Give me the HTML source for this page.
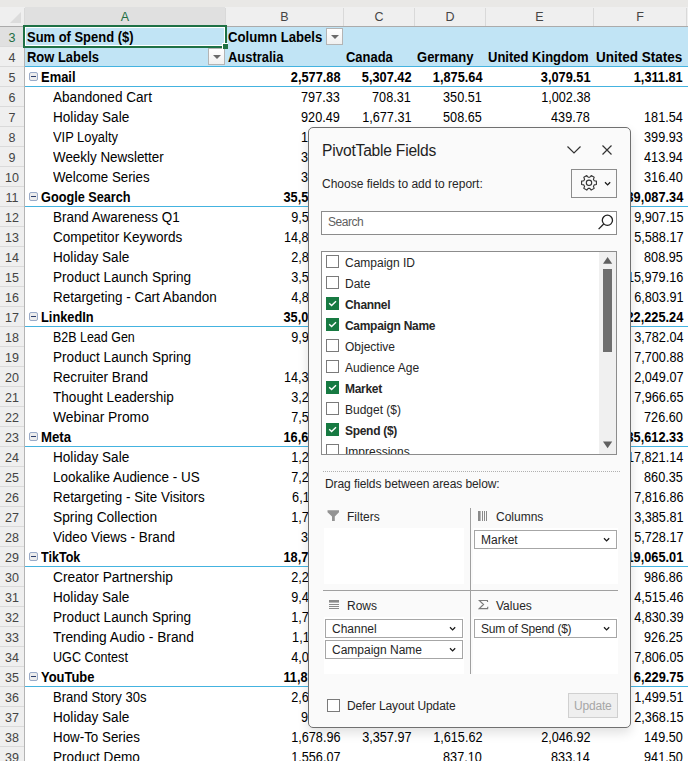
<!DOCTYPE html><html><head><meta charset="utf-8"><style>
*{box-sizing:border-box}
html,body{margin:0;padding:0}
body{width:688px;height:761px;overflow:hidden;position:relative;background:#fff;font-family:"Liberation Sans",sans-serif;color:#000}
.ab{position:absolute}
.t{position:absolute;height:20px;line-height:20px;white-space:nowrap;font-size:14px;transform-origin:0 0;transform:scaleX(0.97)}
.b{font-weight:bold;transform:scaleX(0.925)}
.n{position:absolute;height:20px;line-height:20px;white-space:nowrap;font-size:14px;text-align:right;transform-origin:100% 0;transform:scaleX(0.905)}
.nb{font-weight:bold;transform:scaleX(0.912)}
.rh{position:absolute;left:0;width:24px;height:20px;line-height:20px;text-align:center;font-size:12.5px;color:#444}
.ch{position:absolute;top:8px;height:19px;line-height:19px;text-align:center;font-size:12.5px;color:#444}
.dd{position:absolute;width:17px;height:17px;border:1px solid #b4b4b4;background:linear-gradient(#fff,#f0f0f0)}
.dd:after{content:"";position:absolute;left:4px;top:6px;border-left:4px solid transparent;border-right:4px solid transparent;border-top:4px solid #6a6a6a}
.p{position:absolute;font-size:12px;color:#262626;white-space:nowrap;line-height:16px}
.cb{position:absolute;width:13px;height:13px;border:1px solid #7a7a7a;background:#fff}
.cbc{position:absolute;width:13px;height:13px;background:#177a42}
.item{position:absolute;height:19px;border:1px solid #a6a6a6;background:#fff}
.item span{position:absolute;left:6px;top:1px;font-size:12px;line-height:16px;color:#262626;white-space:nowrap}
.chev{position:absolute;width:5px;height:5px;border-right:1.5px solid #333;border-bottom:1.5px solid #333;transform:rotate(45deg)}
</style></head><body>

<div class="ab" style="left:0;top:0;width:688px;height:7px;background:#e9e8e6"></div>
<div class="ab" style="left:0;top:7px;width:688px;height:19px;background:#efefef"></div>
<div class="ab" style="left:25px;top:7px;width:200px;height:19px;background:#e0e0e0"></div>
<div class="ab" style="left:0;top:26px;width:688px;height:1px;background:#ababab"></div>
<svg class="ab" style="left:0;top:7px" width="24" height="19"><polygon points="10,16 21,16 21,5" fill="#dcdcdc"/></svg>
<div class="ab" style="left:24px;top:8px;width:1px;height:18px;background:#d9d9d9"></div>
<div class="ab" style="left:225px;top:8px;width:1px;height:18px;background:#d9d9d9"></div>
<div class="ab" style="left:343px;top:8px;width:1px;height:18px;background:#d9d9d9"></div>
<div class="ab" style="left:414px;top:8px;width:1px;height:18px;background:#d9d9d9"></div>
<div class="ab" style="left:485px;top:8px;width:1px;height:18px;background:#d9d9d9"></div>
<div class="ab" style="left:593px;top:8px;width:1px;height:18px;background:#d9d9d9"></div>
<div class="ab" style="left:686px;top:8px;width:1px;height:18px;background:#d9d9d9"></div>
<div class="ch" style="left:25px;width:200px;color:#1e6e42">A</div>
<div class="ch" style="left:226px;width:117px;color:#444">B</div>
<div class="ch" style="left:344px;width:70px;color:#444">C</div>
<div class="ch" style="left:415px;width:70px;color:#444">D</div>
<div class="ch" style="left:486px;width:107px;color:#444">E</div>
<div class="ch" style="left:594px;width:92px;color:#444">F</div>
<div class="ab" style="left:0;top:27px;width:24px;height:734px;background:#efefef"></div>
<div class="ab" style="left:0;top:27px;width:24px;height:19px;background:#e0e0e0"></div>
<div class="ab" style="left:24px;top:27px;width:1px;height:734px;background:#b4b4b4"></div>
<div class="rh" style="top:28px;color:#1e6e42">3</div>
<div class="ab" style="left:0;top:46px;width:24px;height:1px;background:#dadada"></div>
<div class="rh" style="top:48px;color:#444">4</div>
<div class="ab" style="left:0;top:66px;width:24px;height:1px;background:#dadada"></div>
<div class="rh" style="top:68px;color:#444">5</div>
<div class="ab" style="left:0;top:86px;width:24px;height:1px;background:#dadada"></div>
<div class="rh" style="top:88px;color:#444">6</div>
<div class="ab" style="left:0;top:106px;width:24px;height:1px;background:#dadada"></div>
<div class="rh" style="top:108px;color:#444">7</div>
<div class="ab" style="left:0;top:126px;width:24px;height:1px;background:#dadada"></div>
<div class="rh" style="top:128px;color:#444">8</div>
<div class="ab" style="left:0;top:146px;width:24px;height:1px;background:#dadada"></div>
<div class="rh" style="top:148px;color:#444">9</div>
<div class="ab" style="left:0;top:166px;width:24px;height:1px;background:#dadada"></div>
<div class="rh" style="top:168px;color:#444">10</div>
<div class="ab" style="left:0;top:186px;width:24px;height:1px;background:#dadada"></div>
<div class="rh" style="top:188px;color:#444">11</div>
<div class="ab" style="left:0;top:206px;width:24px;height:1px;background:#dadada"></div>
<div class="rh" style="top:208px;color:#444">12</div>
<div class="ab" style="left:0;top:226px;width:24px;height:1px;background:#dadada"></div>
<div class="rh" style="top:228px;color:#444">13</div>
<div class="ab" style="left:0;top:246px;width:24px;height:1px;background:#dadada"></div>
<div class="rh" style="top:248px;color:#444">14</div>
<div class="ab" style="left:0;top:266px;width:24px;height:1px;background:#dadada"></div>
<div class="rh" style="top:268px;color:#444">15</div>
<div class="ab" style="left:0;top:286px;width:24px;height:1px;background:#dadada"></div>
<div class="rh" style="top:288px;color:#444">16</div>
<div class="ab" style="left:0;top:306px;width:24px;height:1px;background:#dadada"></div>
<div class="rh" style="top:308px;color:#444">17</div>
<div class="ab" style="left:0;top:326px;width:24px;height:1px;background:#dadada"></div>
<div class="rh" style="top:328px;color:#444">18</div>
<div class="ab" style="left:0;top:346px;width:24px;height:1px;background:#dadada"></div>
<div class="rh" style="top:348px;color:#444">19</div>
<div class="ab" style="left:0;top:366px;width:24px;height:1px;background:#dadada"></div>
<div class="rh" style="top:368px;color:#444">20</div>
<div class="ab" style="left:0;top:386px;width:24px;height:1px;background:#dadada"></div>
<div class="rh" style="top:388px;color:#444">21</div>
<div class="ab" style="left:0;top:406px;width:24px;height:1px;background:#dadada"></div>
<div class="rh" style="top:408px;color:#444">22</div>
<div class="ab" style="left:0;top:426px;width:24px;height:1px;background:#dadada"></div>
<div class="rh" style="top:428px;color:#444">23</div>
<div class="ab" style="left:0;top:446px;width:24px;height:1px;background:#dadada"></div>
<div class="rh" style="top:448px;color:#444">24</div>
<div class="ab" style="left:0;top:466px;width:24px;height:1px;background:#dadada"></div>
<div class="rh" style="top:468px;color:#444">25</div>
<div class="ab" style="left:0;top:486px;width:24px;height:1px;background:#dadada"></div>
<div class="rh" style="top:488px;color:#444">26</div>
<div class="ab" style="left:0;top:506px;width:24px;height:1px;background:#dadada"></div>
<div class="rh" style="top:508px;color:#444">27</div>
<div class="ab" style="left:0;top:526px;width:24px;height:1px;background:#dadada"></div>
<div class="rh" style="top:528px;color:#444">28</div>
<div class="ab" style="left:0;top:546px;width:24px;height:1px;background:#dadada"></div>
<div class="rh" style="top:548px;color:#444">29</div>
<div class="ab" style="left:0;top:566px;width:24px;height:1px;background:#dadada"></div>
<div class="rh" style="top:568px;color:#444">30</div>
<div class="ab" style="left:0;top:586px;width:24px;height:1px;background:#dadada"></div>
<div class="rh" style="top:588px;color:#444">31</div>
<div class="ab" style="left:0;top:606px;width:24px;height:1px;background:#dadada"></div>
<div class="rh" style="top:608px;color:#444">32</div>
<div class="ab" style="left:0;top:626px;width:24px;height:1px;background:#dadada"></div>
<div class="rh" style="top:628px;color:#444">33</div>
<div class="ab" style="left:0;top:646px;width:24px;height:1px;background:#dadada"></div>
<div class="rh" style="top:648px;color:#444">34</div>
<div class="ab" style="left:0;top:666px;width:24px;height:1px;background:#dadada"></div>
<div class="rh" style="top:668px;color:#444">35</div>
<div class="ab" style="left:0;top:686px;width:24px;height:1px;background:#dadada"></div>
<div class="rh" style="top:688px;color:#444">36</div>
<div class="ab" style="left:0;top:706px;width:24px;height:1px;background:#dadada"></div>
<div class="rh" style="top:708px;color:#444">37</div>
<div class="ab" style="left:0;top:726px;width:24px;height:1px;background:#dadada"></div>
<div class="rh" style="top:728px;color:#444">38</div>
<div class="ab" style="left:0;top:746px;width:24px;height:1px;background:#dadada"></div>
<div class="rh" style="top:748px;color:#444">39</div>
<div class="ab" style="left:0;top:766px;width:24px;height:1px;background:#dadada"></div>
<div class="ab" style="left:25px;top:27px;width:663px;height:39px;background:#c1e4f5"></div>
<div class="ab" style="left:25px;top:66px;width:663px;height:1px;background:#44b3e0"></div>
<div class="ab" style="left:25px;top:86px;width:663px;height:1px;background:#44b3e0"></div>
<div class="ab" style="left:25px;top:206px;width:663px;height:1px;background:#44b3e0"></div>
<div class="ab" style="left:25px;top:326px;width:663px;height:1px;background:#44b3e0"></div>
<div class="ab" style="left:25px;top:446px;width:663px;height:1px;background:#44b3e0"></div>
<div class="ab" style="left:25px;top:566px;width:663px;height:1px;background:#44b3e0"></div>
<div class="ab" style="left:25px;top:686px;width:663px;height:1px;background:#44b3e0"></div>
<div class="t b" style="left:27px;top:27px">Sum of Spend ($)</div>
<div class="t b" style="left:228px;top:27px;transform:scaleX(0.94)">Column Labels</div>
<div class="t b" style="left:27px;top:47px">Row Labels</div>
<div class="t b" style="left:228px;top:47px;transform:scaleX(0.925)">Australia</div>
<div class="t b" style="left:346px;top:47px;transform:scaleX(0.925)">Canada</div>
<div class="t b" style="left:417px;top:47px;transform:scaleX(0.93)">Germany</div>
<div class="t b" style="left:488px;top:47px;transform:scaleX(0.93)">United Kingdom</div>
<div class="t b" style="left:596px;top:47px;transform:scaleX(0.965)">United States</div>
<div class="dd" style="left:326px;top:28px"></div>
<div class="dd" style="left:208px;top:48px"></div>
<div class="ab" style="left:23px;top:25px;width:204px;height:23px;border:2px solid #1e7145"></div>
<div class="ab" style="left:25px;top:27px;width:200px;height:19px;border:1px solid #fff"></div>
<div class="ab" style="left:222px;top:43px;width:6px;height:6px;background:#1e7145;border-left:1px solid #fff;border-top:1px solid #fff"></div>
<div class="ab" style="left:29px;top:72px;width:9px;height:9px;border:1px solid #9aabc9;border-radius:2px;background:#ececec"></div>
<div class="ab" style="left:31px;top:76px;width:5px;height:1px;background:#2b3d6b"></div>
<div class="t b" style="left:40.5px;top:67px">Email</div>
<div class="n nb" style="right:348px;top:67px">2,577.88</div>
<div class="n nb" style="right:277px;top:67px">5,307.42</div>
<div class="n nb" style="right:206px;top:67px">1,875.64</div>
<div class="n nb" style="right:98px;top:67px">3,079.51</div>
<div class="n nb" style="right:5px;top:67px">1,311.81</div>
<div class="t" style="left:53px;top:87px">Abandoned Cart</div>
<div class="n" style="right:348px;top:87px">797.33</div>
<div class="n" style="right:277px;top:87px">708.31</div>
<div class="n" style="right:206px;top:87px">350.51</div>
<div class="n" style="right:98px;top:87px">1,002.38</div>
<div class="t" style="left:53px;top:107px">Holiday Sale</div>
<div class="n" style="right:348px;top:107px">920.49</div>
<div class="n" style="right:277px;top:107px">1,677.31</div>
<div class="n" style="right:206px;top:107px">508.65</div>
<div class="n" style="right:98px;top:107px">439.78</div>
<div class="n" style="right:5px;top:107px">181.54</div>
<div class="t" style="left:53px;top:127px;transform:scaleX(0.92)">VIP Loyalty</div>
<div class="n" style="right:348px;top:127px">162.55</div>
<div class="n" style="right:5px;top:127px">399.93</div>
<div class="t" style="left:53px;top:147px;transform:scaleX(0.957)">Weekly Newsletter</div>
<div class="n" style="right:348px;top:147px">312.40</div>
<div class="n" style="right:5px;top:147px">413.94</div>
<div class="t" style="left:53px;top:167px;transform:scaleX(0.95)">Welcome Series</div>
<div class="n" style="right:348px;top:167px">347.61</div>
<div class="n" style="right:5px;top:167px">316.40</div>
<div class="ab" style="left:29px;top:192px;width:9px;height:9px;border:1px solid #9aabc9;border-radius:2px;background:#ececec"></div>
<div class="ab" style="left:31px;top:196px;width:5px;height:1px;background:#2b3d6b"></div>
<div class="t b" style="left:40.5px;top:187px;transform:scaleX(0.907)">Google Search</div>
<div class="n nb" style="right:348px;top:187px">35,512.09</div>
<div class="n nb" style="right:5px;top:187px">39,087.34</div>
<div class="t" style="left:53px;top:207px;transform:scaleX(0.959)">Brand Awareness Q1</div>
<div class="n" style="right:348px;top:207px">9,512.33</div>
<div class="n" style="right:5px;top:207px">9,907.15</div>
<div class="t" style="left:53px;top:227px;transform:scaleX(0.966)">Competitor Keywords</div>
<div class="n" style="right:348px;top:227px">14,812.50</div>
<div class="n" style="right:5px;top:227px">5,588.17</div>
<div class="t" style="left:53px;top:247px">Holiday Sale</div>
<div class="n" style="right:348px;top:247px">2,812.44</div>
<div class="n" style="right:5px;top:247px">808.95</div>
<div class="t" style="left:53px;top:267px">Product Launch Spring</div>
<div class="n" style="right:348px;top:267px">3,512.20</div>
<div class="n" style="right:5px;top:267px">15,979.16</div>
<div class="t" style="left:53px;top:287px;transform:scaleX(0.96)">Retargeting - Cart Abandon</div>
<div class="n" style="right:348px;top:287px">4,862.62</div>
<div class="n" style="right:5px;top:287px">6,803.91</div>
<div class="ab" style="left:29px;top:312px;width:9px;height:9px;border:1px solid #9aabc9;border-radius:2px;background:#ececec"></div>
<div class="ab" style="left:31px;top:316px;width:5px;height:1px;background:#2b3d6b"></div>
<div class="t b" style="left:40.5px;top:307px;transform:scaleX(0.915)">LinkedIn</div>
<div class="n nb" style="right:348px;top:307px">35,012.88</div>
<div class="n nb" style="right:5px;top:307px">22,225.24</div>
<div class="t" style="left:53px;top:327px;transform:scaleX(0.89)">B2B Lead Gen</div>
<div class="n" style="right:348px;top:327px">9,912.04</div>
<div class="n" style="right:5px;top:327px">3,782.04</div>
<div class="t" style="left:53px;top:347px">Product Launch Spring</div>
<div class="n" style="right:5px;top:347px">7,700.88</div>
<div class="t" style="left:53px;top:367px">Recruiter Brand</div>
<div class="n" style="right:348px;top:367px">14,312.77</div>
<div class="n" style="right:5px;top:367px">2,049.07</div>
<div class="t" style="left:53px;top:387px">Thought Leadership</div>
<div class="n" style="right:348px;top:387px">3,212.65</div>
<div class="n" style="right:5px;top:387px">7,966.65</div>
<div class="t" style="left:53px;top:407px;transform:scaleX(0.988)">Webinar Promo</div>
<div class="n" style="right:348px;top:407px">7,512.42</div>
<div class="n" style="right:5px;top:407px">726.60</div>
<div class="ab" style="left:29px;top:432px;width:9px;height:9px;border:1px solid #9aabc9;border-radius:2px;background:#ececec"></div>
<div class="ab" style="left:31px;top:436px;width:5px;height:1px;background:#2b3d6b"></div>
<div class="t b" style="left:40.5px;top:427px;transform:scaleX(0.944)">Meta</div>
<div class="n nb" style="right:348px;top:427px">16,612.10</div>
<div class="n nb" style="right:5px;top:427px">35,612.33</div>
<div class="t" style="left:53px;top:447px">Holiday Sale</div>
<div class="n" style="right:348px;top:447px">1,212.14</div>
<div class="n" style="right:5px;top:447px">17,821.14</div>
<div class="t" style="left:53px;top:467px;transform:scaleX(0.962)">Lookalike Audience - US</div>
<div class="n" style="right:348px;top:467px">7,212.35</div>
<div class="n" style="right:5px;top:467px">860.35</div>
<div class="t" style="left:53px;top:487px;transform:scaleX(0.957)">Retargeting - Site Visitors</div>
<div class="n" style="right:348px;top:487px">6,112.86</div>
<div class="n" style="right:5px;top:487px">7,816.86</div>
<div class="t" style="left:53px;top:507px;transform:scaleX(0.984)">Spring Collection</div>
<div class="n" style="right:348px;top:507px">1,712.81</div>
<div class="n" style="right:5px;top:507px">3,385.81</div>
<div class="t" style="left:53px;top:527px;transform:scaleX(0.965)">Video Views - Brand</div>
<div class="n" style="right:348px;top:527px">312.17</div>
<div class="n" style="right:5px;top:527px">5,728.17</div>
<div class="ab" style="left:29px;top:552px;width:9px;height:9px;border:1px solid #9aabc9;border-radius:2px;background:#ececec"></div>
<div class="ab" style="left:31px;top:556px;width:5px;height:1px;background:#2b3d6b"></div>
<div class="t b" style="left:40.5px;top:547px;transform:scaleX(0.898)">TikTok</div>
<div class="n nb" style="right:348px;top:547px">18,712.01</div>
<div class="n nb" style="right:5px;top:547px">19,065.01</div>
<div class="t" style="left:53px;top:567px;transform:scaleX(0.982)">Creator Partnership</div>
<div class="n" style="right:348px;top:567px">2,212.86</div>
<div class="n" style="right:5px;top:567px">986.86</div>
<div class="t" style="left:53px;top:587px">Holiday Sale</div>
<div class="n" style="right:348px;top:587px">9,412.46</div>
<div class="n" style="right:5px;top:587px">4,515.46</div>
<div class="t" style="left:53px;top:607px">Product Launch Spring</div>
<div class="n" style="right:348px;top:607px">1,712.39</div>
<div class="n" style="right:5px;top:607px">4,830.39</div>
<div class="t" style="left:53px;top:627px;transform:scaleX(0.982)">Trending Audio - Brand</div>
<div class="n" style="right:348px;top:627px">1,112.25</div>
<div class="n" style="right:5px;top:627px">926.25</div>
<div class="t" style="left:53px;top:647px;transform:scaleX(0.9)">UGC Contest</div>
<div class="n" style="right:348px;top:647px">4,012.05</div>
<div class="n" style="right:5px;top:647px">7,806.05</div>
<div class="ab" style="left:29px;top:672px;width:9px;height:9px;border:1px solid #9aabc9;border-radius:2px;background:#ececec"></div>
<div class="ab" style="left:31px;top:676px;width:5px;height:1px;background:#2b3d6b"></div>
<div class="t b" style="left:40.5px;top:667px;transform:scaleX(0.925)">YouTube</div>
<div class="n nb" style="right:348px;top:667px">11,812.75</div>
<div class="n nb" style="right:5px;top:667px">6,229.75</div>
<div class="t" style="left:53px;top:687px;transform:scaleX(0.932)">Brand Story 30s</div>
<div class="n" style="right:348px;top:687px">2,612.51</div>
<div class="n" style="right:5px;top:687px">1,499.51</div>
<div class="t" style="left:53px;top:707px">Holiday Sale</div>
<div class="n" style="right:348px;top:707px">912.15</div>
<div class="n" style="right:5px;top:707px">2,368.15</div>
<div class="t" style="left:53px;top:727px;transform:scaleX(0.954)">How-To Series</div>
<div class="n" style="right:348px;top:727px">1,678.96</div>
<div class="n" style="right:277px;top:727px">3,357.97</div>
<div class="n" style="right:206px;top:727px">1,615.62</div>
<div class="n" style="right:98px;top:727px">2,046.92</div>
<div class="n" style="right:5px;top:727px">149.50</div>
<div class="t" style="left:53px;top:747px">Product Demo</div>
<div class="n" style="right:348px;top:747px">1,556.07</div>
<div class="n" style="right:206px;top:747px">837.10</div>
<div class="n" style="right:98px;top:747px">833.14</div>
<div class="n" style="right:5px;top:747px">941.50</div>
<div class="ab" style="left:308px;top:127px;width:323px;height:601px;background:#fafafa;border:1px solid #707070;border-radius:5px;box-shadow:0 5px 11px rgba(0,0,0,0.12)"></div>
<div class="p" style="left:322px;top:141px;font-size:15.6px;line-height:19px;color:#1f1f1f;letter-spacing:-0.22px">PivotTable Fields</div>
<svg class="ab" style="left:566px;top:144px" width="17" height="12"><polyline points="1.5,2.5 8,9 14.5,2.5" fill="none" stroke="#333" stroke-width="1.2"/></svg>
<svg class="ab" style="left:601px;top:144px" width="12" height="12"><path d="M1.5,1.5 L10.5,10.5 M10.5,1.5 L1.5,10.5" stroke="#333" stroke-width="1.2"/></svg>
<div class="p" style="left:322px;top:176px">Choose fields to add to report:</div>
<div class="ab" style="left:571px;top:169px;width:46px;height:29px;border:1px solid #8c8c8c;background:#fafafa"></div>
<svg class="ab" style="left:579px;top:173px" width="20" height="20" viewBox="0 0 20 20"><path d="M14.85,7.00 L15.19,7.70 L17.41,8.09 L17.41,11.51 L15.19,11.90 L14.85,12.60 L14.41,13.25 L15.18,15.36 L12.22,17.07 L10.78,15.35 L10.00,15.40 L9.22,15.35 L7.78,17.07 L4.82,15.36 L5.59,13.25 L5.15,12.60 L4.81,11.90 L2.59,11.51 L2.59,8.09 L4.81,7.70 L5.15,7.00 L5.59,6.35 L4.82,4.24 L7.78,2.53 L9.22,4.25 L10.00,4.20 L10.78,4.25 L12.22,2.53 L15.18,4.24 L14.41,6.35 Z" fill="none" stroke="#333" stroke-width="1.1" stroke-linejoin="round"/><circle cx="10" cy="9.8" r="2.7" fill="none" stroke="#333" stroke-width="1.1"/></svg>
<svg class="ab" style="left:604px;top:181px" width="8" height="6"><polyline points="1,1.3 3.6,3.9 6.2,1.3" fill="none" stroke="#1a1a1a" stroke-width="1.3"/></svg>
<div class="ab" style="left:321px;top:211px;width:296px;height:24px;border:1px solid #8c8c8c;background:#fff"></div>
<div class="p" style="left:328px;top:214px;color:#606060;letter-spacing:-0.45px">Search</div>
<svg class="ab" style="left:596px;top:213px" width="20" height="20"><circle cx="11.4" cy="7.3" r="5.1" fill="none" stroke="#222" stroke-width="1.3"/><line x1="7.7" y1="11" x2="2.6" y2="16.1" stroke="#222" stroke-width="1.3"/></svg>
<div class="ab" style="left:321px;top:251px;width:296px;height:204px;border:1px solid #8c8c8c;background:#fff;overflow:hidden">
<div class="cb" style="left:4px;top:3px"></div>
<div class="p" style="left:23px;top:3px">Campaign ID</div>
<div class="cb" style="left:4px;top:24px"></div>
<div class="p" style="left:23px;top:24px">Date</div>
<div class="cbc" style="left:4px;top:45px"><svg width="13" height="13" style="position:absolute;left:0;top:0"><polyline points="3.2,6.2 5.6,8.5 10,4.2" fill="none" stroke="#fff" stroke-width="1.4"/></svg></div>
<div class="p" style="left:23px;top:45px;font-weight:bold;letter-spacing:-0.3px">Channel</div>
<div class="cbc" style="left:4px;top:66px"><svg width="13" height="13" style="position:absolute;left:0;top:0"><polyline points="3.2,6.2 5.6,8.5 10,4.2" fill="none" stroke="#fff" stroke-width="1.4"/></svg></div>
<div class="p" style="left:23px;top:66px;font-weight:bold;letter-spacing:-0.3px">Campaign Name</div>
<div class="cb" style="left:4px;top:87px"></div>
<div class="p" style="left:23px;top:87px">Objective</div>
<div class="cb" style="left:4px;top:108px"></div>
<div class="p" style="left:23px;top:108px">Audience Age</div>
<div class="cbc" style="left:4px;top:129px"><svg width="13" height="13" style="position:absolute;left:0;top:0"><polyline points="3.2,6.2 5.6,8.5 10,4.2" fill="none" stroke="#fff" stroke-width="1.4"/></svg></div>
<div class="p" style="left:23px;top:129px;font-weight:bold;letter-spacing:-0.3px">Market</div>
<div class="cb" style="left:4px;top:150px"></div>
<div class="p" style="left:23px;top:150px">Budget ($)</div>
<div class="cbc" style="left:4px;top:171px"><svg width="13" height="13" style="position:absolute;left:0;top:0"><polyline points="3.2,6.2 5.6,8.5 10,4.2" fill="none" stroke="#fff" stroke-width="1.4"/></svg></div>
<div class="p" style="left:23px;top:171px;font-weight:bold;letter-spacing:-0.3px">Spend ($)</div>
<div class="cb" style="left:4px;top:192px"></div>
<div class="p" style="left:23px;top:192px">Impressions</div>
<div class="ab" style="left:277px;top:0;width:17px;height:202px;background:#f0f0f0"></div>
<svg class="ab" style="left:281px;top:5px" width="10" height="8"><polygon points="0,6.8 9.2,6.8 4.6,0" fill="#606060"/></svg>
<div class="ab" style="left:281px;top:17px;width:9px;height:83px;background:#6e6e6e"></div>
<svg class="ab" style="left:281px;top:189px" width="10" height="8"><polygon points="0,0.4 9.2,0.4 4.6,7.2" fill="#606060"/></svg>
</div>
<div class="ab" style="left:323px;top:471px;width:297px;height:0;border-top:1px dotted #b0b0b0"></div>
<div class="p" style="left:325px;top:476px;letter-spacing:-0.09px">Drag fields between areas below:</div>
<svg class="ab" style="left:327px;top:510px" width="13" height="12"><polygon points="0.5,0.2 12,0.2 12,2.3 7.8,6.5 7.8,11 5,11 5,6.5 0.5,2.3" fill="#939393"/></svg>
<div class="p" style="left:347px;top:509px">Filters</div>
<div class="ab" style="left:324px;top:528px;width:140px;height:56px;background:#fff"></div>
<svg class="ab" style="left:477px;top:511px" width="12" height="11"><rect x="1" y="0" width="2.6" height="10" fill="#8a8a8a"/><rect x="5" y="0" width="1" height="10" fill="#8a8a8a"/><rect x="7" y="0" width="1" height="10" fill="#8a8a8a"/><rect x="9" y="0" width="1" height="10" fill="#8a8a8a"/></svg>
<div class="p" style="left:496px;top:509px">Columns</div>
<div class="ab" style="left:473px;top:528px;width:145px;height:56px;background:#fff"></div>
<div class="item" style="left:474px;top:530px;width:143px"><span>Market</span></div>
<svg class="ab" style="left:603px;top:537px" width="8" height="6"><polyline points="1,1.3 3.6,3.9 6.2,1.3" fill="none" stroke="#1a1a1a" stroke-width="1.3"/></svg>
<div class="ab" style="left:470px;top:508px;width:1px;height:166px;background:#a0a0a0"></div>
<div class="ab" style="left:323px;top:590px;width:295px;height:1px;background:#a0a0a0"></div>
<svg class="ab" style="left:329px;top:600px" width="11" height="10"><rect x="0" y="0" width="10" height="2.6" fill="#8a8a8a"/><rect x="0" y="4" width="10" height="1" fill="#8a8a8a"/><rect x="0" y="6" width="10" height="1" fill="#8a8a8a"/><rect x="0" y="8" width="10" height="1" fill="#8a8a8a"/></svg>
<div class="p" style="left:347px;top:598px">Rows</div>
<div class="ab" style="left:324px;top:617px;width:140px;height:57px;background:#fff"></div>
<div class="item" style="left:325px;top:619px;width:138px"><span>Channel</span></div>
<svg class="ab" style="left:449px;top:626px" width="8" height="6"><polyline points="1,1.3 3.6,3.9 6.2,1.3" fill="none" stroke="#1a1a1a" stroke-width="1.3"/></svg>
<div class="item" style="left:325px;top:640px;width:138px"><span>Campaign Name</span></div>
<svg class="ab" style="left:449px;top:647px" width="8" height="6"><polyline points="1,1.3 3.6,3.9 6.2,1.3" fill="none" stroke="#1a1a1a" stroke-width="1.3"/></svg>
<svg class="ab" style="left:478px;top:599px" width="12" height="12"><path d="M9.6,3 L9.4,1.5 L1.3,1.5 L5.5,5.5 L1.3,9.6 L9.6,9.6 L9.8,7.8" fill="none" stroke="#7a7a7a" stroke-width="1.2" stroke-linejoin="miter"/></svg>
<div class="p" style="left:496px;top:598px">Values</div>
<div class="ab" style="left:473px;top:617px;width:145px;height:57px;background:#fff"></div>
<div class="item" style="left:474px;top:619px;width:143px"><span style="letter-spacing:-0.23px">Sum of Spend ($)</span></div>
<svg class="ab" style="left:603px;top:626px" width="8" height="6"><polyline points="1,1.3 3.6,3.9 6.2,1.3" fill="none" stroke="#1a1a1a" stroke-width="1.3"/></svg>
<div class="cb" style="left:327px;top:699px"></div>
<div class="p" style="left:347px;top:698px;letter-spacing:-0.12px">Defer Layout Update</div>
<div class="ab" style="left:568px;top:693px;width:50px;height:25px;border:1px solid #d0d0d0;background:#efefef"></div>
<div class="p" style="left:574px;top:698px;color:#a6a6a6;letter-spacing:-0.2px">Update</div>
</body></html>
